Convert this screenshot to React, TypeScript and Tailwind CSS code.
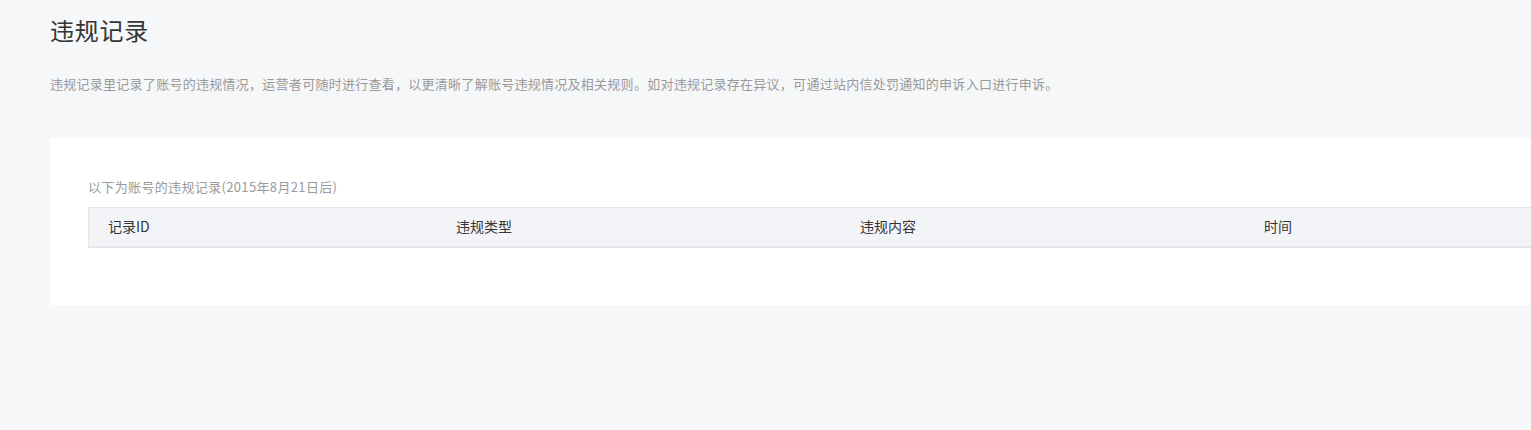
const columns = [
  { label: "记录ID", width: "w-[348px]" },
  { label: "违规类型", width: "w-[404px]" },
  { label: "违规内容", width: "w-[404px]" },
  { label: "时间", width: "w-[404px]" },
];

export default function App() {
  return (
    <div
      className="min-h-[430px] w-full overflow-hidden bg-[#f6f7f9]"
      style={{ fontFamily: '"Noto Sans CJK SC", "Noto Sans", sans-serif' }}
    >
      <div className="w-[1760px] pl-[50px]">
        <h1 className="pt-[14px] text-[24px] leading-[32px] tracking-[0.75px] text-[#353535]">违规记录</h1>
        <p className="mt-[28px] text-[13px] leading-[20px] tracking-[0.27px] text-[#9a9a9a]">
          违规记录里记录了账号的违规情况，运营者可随时进行查看，以更清晰了解账号违规情况及相关规则。如对违规记录存在异议，可通过站内信处罚通知的申诉入口进行申诉。
        </p>
        <div className="mt-[44px] bg-white pl-[38px] pt-[39px] pb-[57px]">
          <div className="text-[13px] leading-[20px] tracking-[0.35px] text-[#9a9a9a]">以下为账号的违规记录(2015年8月21日后)</div>
          <div className="mt-[10px] flex h-[41px] items-center border-t border-l border-b-2 border-[#e4e6eb] bg-[#f3f4f8] text-[14px] text-[#353535]">
            {columns.map((c) => (
              <div key={c.label} className={`${c.width} pl-[19px] pb-[1px]`}>
                {c.label}
              </div>
            ))}
          </div>
        </div>
      </div>
    </div>
  );
}
